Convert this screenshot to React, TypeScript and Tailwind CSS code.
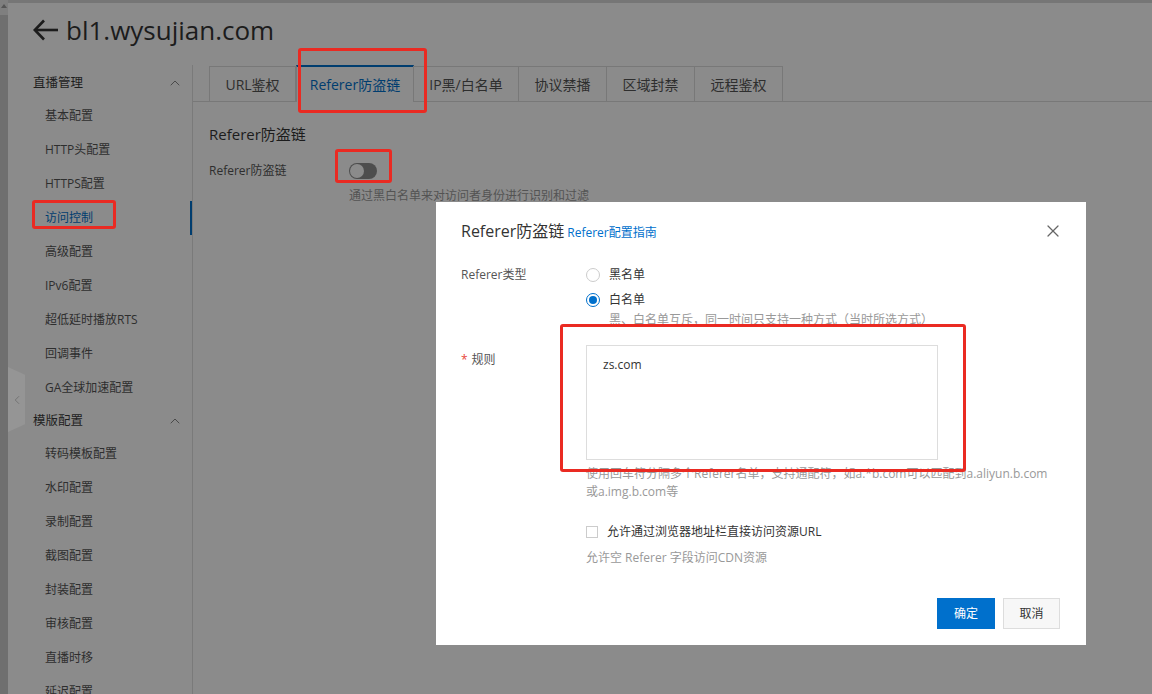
import { ChevronLeft, ChevronUp, X } from "lucide-react";

const FONT = "font-['Open_Sans','Noto_Sans_CJK_SC',sans-serif]";

// The page behind the dialog is painted in its masked (dimmed) colours.

interface NavItem {
  label: string;
  active?: boolean;
}

const liveItems: NavItem[] = [
  { label: "基本配置" },
  { label: "HTTP头配置" },
  { label: "HTTPS配置" },
  { label: "访问控制", active: true },
  { label: "高级配置" },
  { label: "IPv6配置" },
  { label: "超低延时播放RTS" },
  { label: "回调事件" },
  { label: "GA全球加速配置" },
];

const templateItems: NavItem[] = [
  { label: "转码模板配置" },
  { label: "水印配置" },
  { label: "录制配置" },
  { label: "截图配置" },
  { label: "封装配置" },
  { label: "审核配置" },
  { label: "直播时移" },
  { label: "延迟配置" },
];

const tabs = [
  { label: "URL鉴权", w: "w-[87px]" },
  { label: "Referer防盗链", w: "w-[118px]", active: true },
  { label: "IP黑/白名单", w: "w-[106px]" },
  { label: "协议禁播", w: "w-[89px]" },
  { label: "区域封禁", w: "w-[89px]" },
  { label: "远程鉴权", w: "w-[89px]" },
];

function NavGroup({ title, items }: { title: string; items: NavItem[] }) {
  return (
    <div>
      <div className="flex h-[32px] items-center justify-between pl-[25px] pr-[9px] text-[12.5px] text-[#1e1e1e]">
        <span>{title}</span>
        <ChevronUp size={16} strokeWidth={1.5} className="text-[#4a4a4a]" />
      </div>
      {items.map((item) => (
        <div
          key={item.label}
          className={
            "flex h-[34px] items-center pl-[37px] text-[12px] " +
            (item.active ? "text-[#003d6f] shadow-[inset_-2px_0_0_#003d6f]" : "text-[#2e2e2e]")
          }
        >
          {item.label}
        </div>
      ))}
    </div>
  );
}

function Sidebar() {
  return (
    <aside className="w-[185px] shrink-0 border-r border-[#7a7a7a] bg-[#8b8b8b] pt-[2px]">
      <NavGroup title="直播管理" items={liveItems} />
      <NavGroup title="模版配置" items={templateItems} />
    </aside>
  );
}

function Tabs() {
  return (
    <div className="flex h-[36px] border-b border-[#787878] pl-4">
      {tabs.map((t) =>
        t.active ? (
          <div
            key={t.label}
            className={`${t.w} -mb-px -mt-px flex items-center justify-center border-t-2 border-x border-t-[#003d6f] border-x-[#787878] bg-[#8b8b8b] text-[14px] text-[#003d6f]`}
          >
            {t.label}
          </div>
        ) : (
          <div
            key={t.label}
            className={`${t.w} -ml-px flex items-center justify-center border border-b-0 border-[#787878] text-[14px] text-[#2e2e2e] first:ml-0`}
          >
            {t.label}
          </div>
        ),
      )}
    </div>
  );
}

function Main() {
  return (
    <main className="flex-1 bg-[#8b8b8b] pt-[1px]">
      <Tabs />
      <div className="pl-4">
        <h3 className="mt-[20px] text-[15px] leading-[24px] text-[#1c1c1c]">Referer防盗链</h3>
        <div className="mt-[16px] flex">
          <div className="w-[140px] text-[12px] leading-[18px] text-[#2e2e2e]">Referer防盗链</div>
          <div>
            <div className="flex h-[18px] items-center">
              <div className="flex h-[16px] w-[28px] items-center rounded-full bg-[#4d4d4d] px-[1px]">
                <div className="h-[14px] w-[14px] rounded-full bg-[#8b8b8b]" />
              </div>
            </div>
            <p className="mt-[7px] text-[12px] text-[#535353]">通过黑白名单来对访问者身份进行识别和过滤</p>
          </div>
        </div>
      </div>
    </main>
  );
}

function Dialog() {
  return (
    <div className="absolute left-[436px] top-[202px] z-20 h-[443px] w-[650px] bg-white px-[25px] pt-[18px]">
      <div className="flex items-center justify-between">
        <div className="flex items-baseline gap-[3px]">
          <span className="text-[16px] leading-[22px] text-[#333]">Referer防盗链</span>
          <span className="text-[12px] text-[#0070cc]">Referer配置指南</span>
        </div>
        <X size={20} strokeWidth={1.5} className="-mr-[2px] text-[#666]" />
      </div>

      <div className="mt-[24px] flex text-[12px]">
        <div className="w-[125px] leading-[18px] text-[#555]">Referer类型</div>
        <div>
          <label className="flex h-[18px] items-center gap-[9px] text-[#333]">
            <span className="h-[14px] w-[14px] rounded-full border border-[#ccc] bg-white" />
            黑名单
          </label>
          <label className="mt-[7px] flex h-[18px] items-center gap-[9px] text-[#333]">
            <span className="flex h-[14px] w-[14px] items-center justify-center rounded-full border border-[#0070cc] bg-white">
              <span className="h-[8px] w-[8px] rounded-full bg-[#0070cc]" />
            </span>
            白名单
          </label>
          <p className="ml-[23px] mt-[2px] leading-[18px] text-[#999]">
            黑、白名单互斥，同一时间只支持一种方式（当时所选方式）
          </p>
        </div>
      </div>

      <div className="mt-[16px] flex text-[12px]">
        <div className="w-[125px] pt-[6px] leading-[18px] text-[#555]">
          <span className="mr-[4px] text-[#e84738]">*</span>规则
        </div>
        <div>
          <div className="h-[115px] w-[352px] border border-[#ddd] px-[16px] pt-[10px] text-[12px] text-[#333]">
            zs.com
          </div>
          <p className="mt-[5px] leading-[18px] text-[#999]">
            使用回车符分隔多个Referer名单，支持通配符，如a.*b.com可以匹配到a.aliyun.b.com
            <br />
            或a.img.b.com等
          </p>
          <label className="mt-[22px] flex h-[18px] items-center gap-[9px] text-[#333]">
            <span className="h-[12px] w-[12px] border border-[#ccc] bg-white" />
            允许通过浏览器地址栏直接访问资源URL
          </label>
          <p className="mt-[8px] leading-[18px] text-[#999]">允许空 Referer 字段访问CDN资源</p>
        </div>
      </div>

      <div className="absolute bottom-[16px] right-[26px] flex gap-[8px] text-[12px]">
        <button className="h-[31px] w-[58px] bg-[#0070cc] text-white">确定</button>
        <button className="h-[31px] w-[57px] border border-[#ddd] bg-[#f7f7f7] text-[#333]">取消</button>
      </div>
    </div>
  );
}

function Mark({ className }: { className: string }) {
  return <div className={`absolute z-30 rounded-[3px] border-[3px] border-[#ea2a22] ${className}`} />;
}

export default function App() {
  return (
    <div className={`relative flex h-[694px] w-[1152px] overflow-hidden bg-[#8b8b8b] ${FONT}`}>
      <div className="flex w-[8px] shrink-0 flex-col bg-[#6f6f6f]">
        <div className="flex h-[15px] items-start justify-center bg-[#7f7f7f] pt-[4px]">
          <div className="h-0 w-0 border-x-[3px] border-b-[4px] border-x-transparent border-b-[#555]" />
        </div>
      </div>

      <div className="flex min-h-0 flex-1 flex-col border-t-[3px] border-[#767676] bg-[#8b8b8b]">
        <header className="flex h-[62px] shrink-0 items-start gap-[8px] bg-[#8b8b8b] pl-[25px] pt-[9px]">
          <svg width="25" height="22" viewBox="0 0 25 22" className="mt-[7px] text-[#1c1c1c]">
            <polyline points="11,1.5 1.8,11 11,20.5" fill="none" stroke="currentColor" strokeWidth="2.6" />
            <line x1="2" y1="11" x2="25" y2="11" stroke="currentColor" strokeWidth="2.6" />
          </svg>
          <h1 className="text-[26px] leading-[36px] text-[#1c1c1c]">bl1.wysujian.com</h1>
        </header>
        <div className="flex min-h-0 flex-1">
          <Sidebar />
          <Main />
        </div>
      </div>

      <Dialog />

      <div className="absolute left-[8px] top-[367px] z-30 flex h-[65px] w-[17px] items-center justify-center bg-[#959595] [clip-path:polygon(0_0,100%_12%,100%_88%,0_100%)]">
        <ChevronLeft size={14} strokeWidth={1.5} className="text-[#6f6f6f]" />
      </div>

      <Mark className="left-[298px] top-[48px] h-[65px] w-[129px]" />
      <Mark className="left-[335px] top-[149px] h-[34px] w-[57px]" />
      <Mark className="left-[32px] top-[200px] h-[29px] w-[84px]" />
      <Mark className="left-[560px] top-[324px] h-[148px] w-[406px]" />
    </div>
  );
}
